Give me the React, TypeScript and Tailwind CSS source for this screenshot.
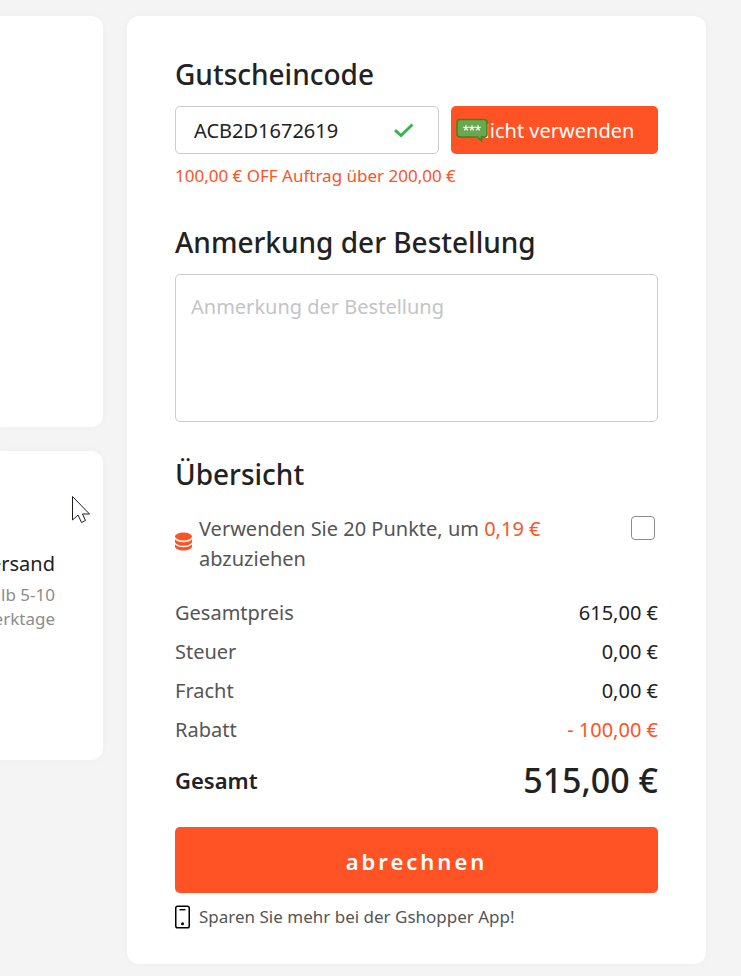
import { useState, type ReactNode } from "react";
import clsx from "clsx";

const totals = [
  { label: "Gesamtpreis", value: "615,00 €" },
  { label: "Steuer", value: "0,00 €" },
  { label: "Fracht", value: "0,00 €" },
  { label: "Rabatt", value: "- 100,00 €", discount: true },
];

const SectionTitle = ({ htmlFor, children }: { htmlFor?: string; children: ReactNode }) => (
  <h2 className="mb-[14px] text-[28px] leading-9 font-medium text-[#222]">
    {htmlFor ? <label htmlFor={htmlFor}>{children}</label> : children}
  </h2>
);

const CheckIcon = () => (
  <svg className="h-4 w-5 shrink-0" viewBox="0 0 20 16" fill="none" aria-hidden="true">
    <path d="M1 8.2 7 13.5 18.5 2.5" stroke="#3bb44f" strokeWidth="3" />
  </svg>
);

const CoinsIcon = () => (
  <svg className="mb-1.5 h-[19px] w-[17px] shrink-0" viewBox="0 0 17 19" fill="#ff5225" aria-hidden="true">
    <ellipse cx="8.5" cy="4.5" rx="8.5" ry="4" />
    <path d="M0 7.2C1.5 9.2 4.6 10.2 8.5 10.2S15.5 9.2 17 7.2V9.8C17 12 13.2 13.8 8.5 13.8S0 12 0 9.8Z" />
    <path d="M0 12.2C1.5 14.2 4.6 15.2 8.5 15.2S15.5 14.2 17 12.2V14.6C17 16.9 13.2 18.6 8.5 18.6S0 16.9 0 14.6Z" />
  </svg>
);

const PhoneIcon = () => (
  <svg className="h-6 w-[15px] shrink-0" viewBox="0 0 15 24" fill="none" aria-hidden="true">
    <rect x="0.75" y="1.25" width="13.5" height="21.5" rx="1.8" stroke="#000" strokeWidth="1.5" />
    <path d="M4.5 4.7h6" stroke="#000" strokeWidth="1.4" />
    <circle cx="7.5" cy="18.8" r="1.5" fill="#000" />
  </svg>
);

const BubbleIcon = () => (
  <svg className="absolute top-3 left-[5px] h-6 w-8" viewBox="0 0 32 24" aria-hidden="true">
    <path
      d="M4 1.5H28Q31 1.5 31 4.5V16Q31 19 28 19H25.500V23L21.500 19H4Q1 19 1 16V4.500Q1 1.500 4 1.500Z"
      fill="#6aa84f"
      stroke="#3f8222"
      strokeWidth="1.5"
    />
    <path
      d="M10 10V7.2M10 10l2.700-.9M10 10l1.700 2.300M10 10l-1.700 2.300M10 10l-2.700-.9M16 10V7.200M16 10l2.700-.9M16 10l1.700 2.300M16 10l-1.700 2.300M16 10l-2.700-.9M22 10V7.200M22 10l2.700-.9M22 10l1.700 2.300M22 10l-1.700 2.300M22 10l-2.700-.9"
      stroke="#fff"
      strokeWidth="1.2"
    />
  </svg>
);

const Pointer = () => (
  <svg className="absolute top-11 left-[71px] h-7 w-5" viewBox="0 0 20 28" aria-hidden="true">
    <path
      d="M1.5 1.5V25L7 20L10.5 27.5L14.5 25.5L11.500 19H18.500Z"
      fill="#fff"
      stroke="#1a1a2a"
      strokeWidth="1"
    />
  </svg>
);

const ShippingColumn = () => (
  <div className="flex w-[103px] shrink-0 flex-col gap-6">
    <section className="h-[411px] rounded-r-xl bg-white shadow-[0_0_8px_rgba(0,0,0,0.03)]" />
    <section className="relative flex h-[309px] flex-col items-end overflow-hidden rounded-r-xl bg-white pt-[98px] pr-12 text-right whitespace-nowrap shadow-[0_0_8px_rgba(0,0,0,0.03)]">
      <h3 className="text-[20px] leading-[30px] text-[#222]">Versand</h3>
      <p className="mt-1 text-[17px] leading-6 text-[#8c8c8c]">
        innerhalb 5-10
        <br />
        Werktage
      </p>
      <Pointer />
    </section>
  </div>
);

const Coupon = () => {
  const [code, setCode] = useState("ACB2D1672619");

  return (
    <section>
      <SectionTitle htmlFor="coupon">Gutscheincode</SectionTitle>
      <div className="flex gap-3">
        <div className="flex h-12 min-w-0 flex-1 items-center rounded-[5px] border border-[#ccc] pr-6 pl-[18px]">
          <input
            id="coupon"
            type="text"
            value={code}
            onChange={(e) => setCode(e.target.value)}
            className="min-w-0 flex-1 pt-0.5 text-[20px] leading-[30px] text-[#222] outline-none"
          />
          <CheckIcon />
        </div>
        <button type="button" className="relative h-12 w-[207px] shrink-0 rounded-[5px] bg-[#ff5225] pt-0.5 text-[20px] text-white">
          Nicht verwenden
          <BubbleIcon />
        </button>
      </div>
      <p className="mt-2 text-[17px] leading-7 text-[#ff5225]">100,00 € OFF Auftrag über 200,00 €</p>
    </section>
  );
};

const Summary = () => (
  <section className="mt-[34px]">
    <SectionTitle>Übersicht</SectionTitle>
    <div className="mt-[22px] flex items-start justify-between">
      <label htmlFor="points" className="flex max-w-[380px] items-center gap-[7px] text-[20px] leading-[30px] text-[#555]">
        <CoinsIcon />
        <span>
          Verwenden Sie 20 Punkte, um <span className="text-[#ff5225]">0,19 €</span> abzuziehen
        </span>
      </label>
      <input
        id="points"
        type="checkbox"
        className="mt-0.5 mr-[3px] size-6 shrink-0 appearance-none rounded-[4px] border border-[#8c8c8c] bg-white checked:bg-[#ff5225]"
      />
    </div>
    <dl className="mt-[19px] text-[20px] leading-[39px]">
      {totals.map((row) => (
        <div key={row.label} className="flex justify-between">
          <dt className="text-[#555]">{row.label}</dt>
          <dd className={clsx(row.discount ? "text-[#ff5225]" : "text-[#222]")}>{row.value}</dd>
        </div>
      ))}
      <div className="flex h-[62px] items-center justify-between text-[#222]">
        <dt className="text-[22px] font-semibold">Gesamt</dt>
        <dd className="text-[34px] font-medium">515,00 €</dd>
      </div>
    </dl>
    <button
      type="button"
      className="mt-4 h-[66px] w-full rounded-[5px] bg-[#ff5225] pt-0.5 text-[22px] font-semibold tracking-[3px] text-white"
    >
      abrechnen
    </button>
    <p className="mt-3 flex items-center gap-[9px] text-[17px] leading-6 text-[#555]">
      <PhoneIcon />
      Sparen Sie mehr bei der Gshopper App!
    </p>
  </section>
);

export default function App() {
  return (
    <main className="flex min-h-screen items-start gap-6 bg-[#f4f4f4] pt-4 pr-[35px] pb-3 font-['Noto_Sans','Open_Sans',sans-serif]">
      <ShippingColumn />
      <div className="min-w-0 flex-1 rounded-xl bg-white px-12 pt-10 pb-[35px] shadow-[0_0_8px_rgba(0,0,0,0.03)]">
        <Coupon />
        <section className="mt-[34px]">
          <SectionTitle htmlFor="note">Anmerkung der Bestellung</SectionTitle>
          <textarea
            id="note"
            placeholder="Anmerkung der Bestellung"
            className="block h-[148px] w-full resize-none rounded-[5px] border border-[#ccc] px-[15px] py-[17px] text-[20px] leading-[30px] text-[#222] outline-none placeholder:text-[#c4c4c4]"
          />
        </section>
        <Summary />
      </div>
    </main>
  );
}
